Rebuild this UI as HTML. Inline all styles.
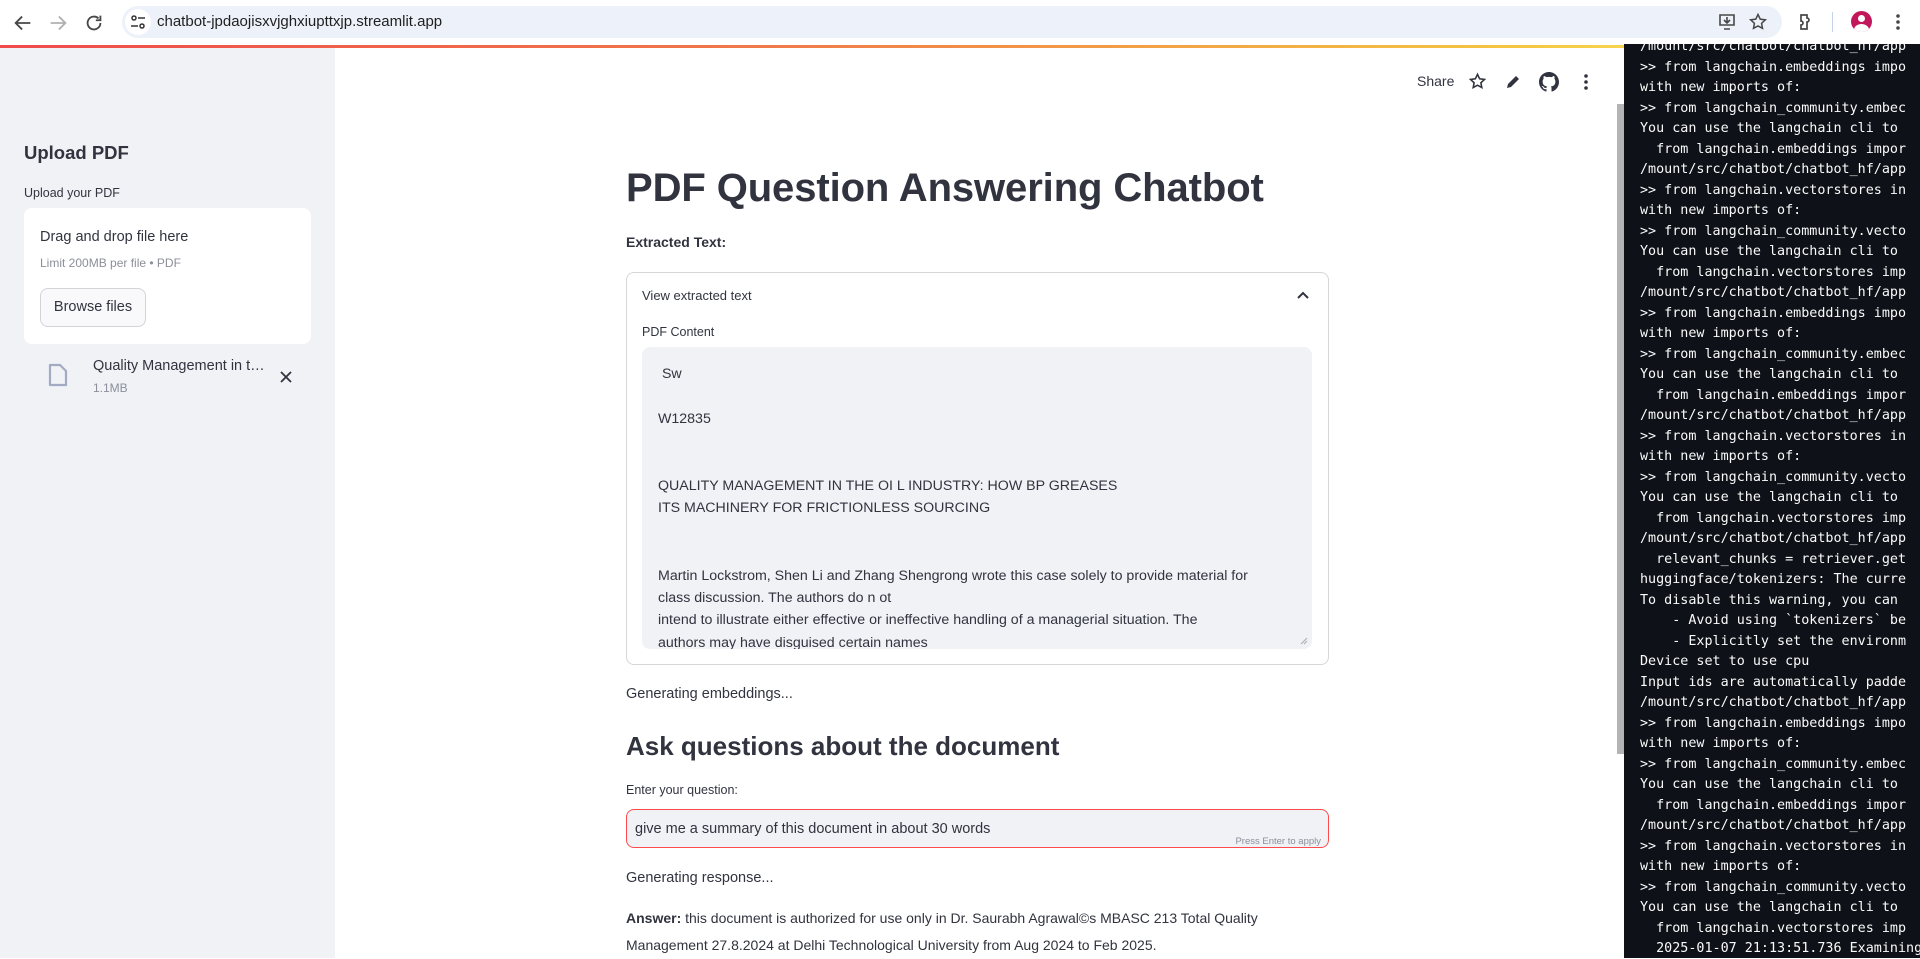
<!DOCTYPE html>
<html><head><meta charset="utf-8">
<style>
*{box-sizing:border-box;margin:0;padding:0}
html,body{width:1920px;height:958px;overflow:hidden;background:#fff;font-family:"Liberation Sans",sans-serif;color:#31333f}
.abs{position:absolute}
#bar{position:absolute;left:0;top:0;width:1920px;height:46px;background:#fff}
#addr{position:absolute;left:122px;top:6px;width:1660px;height:32px;border-radius:16px;background:#edf2fa}
#deco{position:absolute;left:0;top:45px;width:1920px;height:3px;background:linear-gradient(90deg,#ef4b4b 0%,#f07a4a 40%,#f5c842 80%,#fffd80 100%)}
#side{position:absolute;left:0;top:48px;width:335px;height:910px;background:#f0f2f6}
#term{position:absolute;left:1624px;top:44px;width:296px;height:914px;background:#0e1117;color:#fafafa;font-family:"DejaVu Sans Mono","Liberation Mono",monospace;font-size:13.4px;line-height:20.5px;white-space:pre;overflow:hidden;padding-left:16px}
#term div{margin-top:-7px}
</style></head><body>
<div id="bar">
 <svg class="abs" style="left:12px;top:12px" width="22" height="22" viewBox="0 0 24 24"><path d="M20 12H5M11 5l-7 7 7 7" fill="none" stroke="#474747" stroke-width="2"/></svg>
 <svg class="abs" style="left:47px;top:12px" width="22" height="22" viewBox="0 0 24 24"><path d="M4 12h15M13 5l7 7-7 7" fill="none" stroke="#b0b0b0" stroke-width="2"/></svg>
 <svg class="abs" style="left:83px;top:12px" width="22" height="22" viewBox="0 0 24 24"><path d="M19 12a7 7 0 1 1-2.1-5M19 4v5h-5" fill="none" stroke="#474747" stroke-width="2"/></svg>
 <div id="addr">
  <div class="abs" style="left:3px;top:3px;width:26px;height:26px;border-radius:13px;background:#fff"></div>
  <svg class="abs" style="left:8px;top:8px" width="16" height="16" viewBox="0 0 16 16"><circle cx="4" cy="4" r="2" fill="none" stroke="#333" stroke-width="1.5"/><path d="M8 4h7M1 12h7" stroke="#333" stroke-width="1.5"/><circle cx="12" cy="12" r="2" fill="none" stroke="#333" stroke-width="1.5"/></svg>
  <div class="abs" style="left:35px;top:7px;font-size:15px;color:#1f1f1f">chatbot-jpdaojisxvjghxiupttxjp.streamlit.app</div>
  <svg class="abs" style="left:1596px;top:7px" width="18" height="18" viewBox="0 0 18 18"><path d="M2 2h14v10H2zM6 16h6M9 4v6M6 7l3 3 3-3" fill="none" stroke="#474747" stroke-width="1.6"/></svg>
  <svg class="abs" style="left:1626px;top:6px" width="20" height="20" viewBox="0 0 24 24"><path d="M12 3l2.7 5.6 6.1.8-4.5 4.2 1.1 6L12 16.7 6.6 19.6l1.1-6L3.2 9.4l6.1-.8z" fill="none" stroke="#474747" stroke-width="1.8"/></svg>
 </div>
 <svg class="abs" style="left:1796px;top:12px" width="20" height="20" viewBox="0 0 20 20"><path d="M5 3h6v3a2 2 0 0 1 0 4v0v7H5v-4a2 2 0 0 0 0-4z" fill="none" stroke="#474747" stroke-width="1.7"/></svg>
 <div class="abs" style="left:1832px;top:12px;width:1px;height:20px;background:#c5d3ea"></div>
 <div class="abs" style="left:1851px;top:11px;width:21px;height:21px;border-radius:50%;background:#c2185b;overflow:hidden"><div class="abs" style="left:7px;top:4px;width:7px;height:7px;border-radius:50%;background:#fff"></div><div class="abs" style="left:3px;top:13px;width:15px;height:12px;border-radius:50%;background:#fff"></div></div>
 <svg class="abs" style="left:1893px;top:12px" width="10" height="20" viewBox="0 0 10 20"><circle cx="5" cy="4" r="1.8" fill="#474747"/><circle cx="5" cy="10" r="1.8" fill="#474747"/><circle cx="5" cy="16" r="1.8" fill="#474747"/></svg>
</div>
<div id="deco"></div>
<div id="side">
 <div class="abs" style="left:24px;top:94px;font-size:18.5px;font-weight:bold">Upload PDF</div>
 <div class="abs" style="left:24px;top:138px;font-size:12.5px">Upload your PDF</div>
 <div class="abs" style="left:24px;top:160px;width:287px;height:136px;background:#fff;border-radius:8px">
  <div class="abs" style="left:16px;top:21px;font-size:14.5px">Drag and drop file here</div>
  <div class="abs" style="left:16px;top:48px;font-size:12px;color:#8c8f99">Limit 200MB per file • PDF</div>
  <div class="abs" style="left:16px;top:80px;width:106px;height:39px;border:1px solid #d3d4d8;border-radius:8px;background:#f9f9fb;font-size:14.5px;line-height:37px;text-align:center">Browse files</div>
 </div>
 <svg class="abs" style="left:47px;top:315px" width="22" height="24" viewBox="0 0 22 24"><path d="M3 2h10l6 6v14H3z" fill="none" stroke="#a3abc4" stroke-width="2.2" stroke-linejoin="round"/></svg>
 <div class="abs" style="left:93px;top:310px;font-size:14.5px">Quality Management in t…</div>
 <div class="abs" style="left:93px;top:333px;font-size:12px;color:#8c8f99">1.1MB</div>
 <svg class="abs" style="left:279px;top:322px" width="14" height="14" viewBox="0 0 14 14"><path d="M2 2l10 10M12 2L2 12" stroke="#31333f" stroke-width="1.8"/></svg>
</div>
<div class="abs" style="left:1417px;top:73px;font-size:14px">Share</div>
<svg class="abs" style="left:1468px;top:72px" width="19" height="19" viewBox="0 0 24 24"><path d="M12 3l2.7 5.6 6.1.8-4.5 4.2 1.1 6L12 16.7 6.6 19.6l1.1-6L3.2 9.4l6.1-.8z" fill="none" stroke="#31333f" stroke-width="2"/></svg>
<svg class="abs" style="left:1505px;top:74px" width="16" height="16" viewBox="0 0 16 16"><path d="M2 14l1-4 8-8 3 3-8 8z" fill="#31333f"/></svg>
<svg class="abs" style="left:1539px;top:72px" width="20" height="20" viewBox="0 0 16 16"><path fill="#31333f" d="M8 0C3.58 0 0 3.58 0 8c0 3.54 2.290 6.530 5.470 7.590.4.07.55-.17.55-.38 0-.19-.01-.82-.01-1.49-2.010.37-2.530-.49-2.690-.94-.09-.23-.48-.94-.82-1.130-.28-.15-.68-.52-.01-.53.63-.01 1.080.58 1.230.82.72 1.210 1.870.87 2.330.66.07-.52.28-.87.51-1.070-1.780-.2-3.640-.89-3.640-3.950 0-.87.31-1.590.82-2.150-.08-.2-.36-1.020.08-2.120 0 0 .67-.21 2.200.82.64-.18 1.320-.27 2-.27.68 0 1.360.09 2 .27 1.530-1.040 2.200-.82 2.200-.82.44 1.100.16 1.920.08 2.120.51.56.82 1.270.82 2.150 0 3.070-1.870 3.750-3.650 3.950.29.25.54.73.54 1.480 0 1.070-.01 1.930-.01 2.200 0 .21.15.46.55.38A8.013 8.013 0 0016 8c0-4.420-3.580-8-8-8z"/></svg>
<svg class="abs" style="left:1581px;top:72px" width="10" height="20" viewBox="0 0 10 20"><circle cx="5" cy="4" r="1.8" fill="#31333f"/><circle cx="5" cy="10" r="1.8" fill="#31333f"/><circle cx="5" cy="16" r="1.8" fill="#31333f"/></svg>
<div class="abs" style="left:1617px;top:104px;width:7px;height:650px;background:#b4b4b4"></div>
<div class="abs" style="left:626px;top:166px;font-size:40px;font-weight:bold;letter-spacing:-0.1px">PDF Question Answering Chatbot</div>
<div class="abs" style="left:626px;top:234px;font-size:14px;font-weight:bold">Extracted Text:</div>
<div class="abs" style="left:626px;top:272px;width:703px;height:393px;border:1px solid #d6d6d9;border-radius:8px">
 <div class="abs" style="left:15px;top:15px;font-size:13px">View extracted text</div>
 <svg class="abs" style="left:669px;top:17px" width="14" height="10" viewBox="0 0 14 10"><path d="M2 8l5-5 5 5" fill="none" stroke="#31333f" stroke-width="2"/></svg>
 <div class="abs" style="left:15px;top:52px;font-size:12.5px">PDF Content</div>
 <div class="abs" style="left:15px;top:74px;width:670px;height:302px;background:#f0f2f6;border-radius:8px;overflow:hidden">
  <div class="abs" style="left:16px;top:16px;font-size:14.2px;line-height:22.4px;white-space:pre"> Sw

W12835


QUALITY MANAGEMENT IN THE OI L INDUSTRY: HOW BP GREASES
ITS MACHINERY FOR FRICTIONLESS SOURCING


Martin Lockstrom, Shen Li and Zhang Shengrong wrote this case solely to provide material for
class discussion. The authors do n ot
intend to illustrate either effective or ineffective handling of a managerial situation. The
authors may have disguised certain names</div>
  <svg class="abs" style="left:658px;top:290px" width="8" height="8" viewBox="0 0 8 8"><path d="M7 1L1 7M7 4L4 7" stroke="#aaa" stroke-width="1"/></svg>
 </div>
</div>
<div class="abs" style="left:626px;top:686px;font-size:14.5px">Generating embeddings...</div>
<div class="abs" style="left:626px;top:731px;font-size:26px;font-weight:bold">Ask questions about the document</div>
<div class="abs" style="left:626px;top:783px;font-size:12.5px">Enter your question:</div>
<div class="abs" style="left:626px;top:809px;width:703px;height:39px;border:1px solid #ff4b4b;border-radius:8px;background:#f0f2f6">
 <div class="abs" style="left:8px;top:11px;font-size:14.5px">give me a summary of this document in about 30 words</div>
 <div class="abs" style="right:7px;top:26px;font-size:9.5px;color:#8c8f99">Press Enter to apply</div>
</div>
<div class="abs" style="left:626px;top:870px;font-size:14.5px">Generating response...</div>
<div class="abs" style="left:626px;top:905px;font-size:14px;line-height:27px;width:700px"><b>Answer:</b> this document is authorized for use only in Dr. Saurabh Agrawal©s MBASC 213 Total Quality Management 27.8.2024 at Delhi Technological University from Aug 2024 to Feb 2025.</div>
<div id="term"><div>/mount/src/chatbot/chatbot_hf/app
>> from langchain.embeddings impo
with new imports of:
>> from langchain_community.embec
You can use the langchain cli to
  from langchain.embeddings impor
/mount/src/chatbot/chatbot_hf/app
>> from langchain.vectorstores in
with new imports of:
>> from langchain_community.vecto
You can use the langchain cli to
  from langchain.vectorstores imp
/mount/src/chatbot/chatbot_hf/app
>> from langchain.embeddings impo
with new imports of:
>> from langchain_community.embec
You can use the langchain cli to
  from langchain.embeddings impor
/mount/src/chatbot/chatbot_hf/app
>> from langchain.vectorstores in
with new imports of:
>> from langchain_community.vecto
You can use the langchain cli to
  from langchain.vectorstores imp
/mount/src/chatbot/chatbot_hf/app
  relevant_chunks = retriever.get
huggingface/tokenizers: The curre
To disable this warning, you can
    - Avoid using `tokenizers` be
    - Explicitly set the environm
Device set to use cpu
Input ids are automatically padde
/mount/src/chatbot/chatbot_hf/app
>> from langchain.embeddings impo
with new imports of:
>> from langchain_community.embec
You can use the langchain cli to
  from langchain.embeddings impor
/mount/src/chatbot/chatbot_hf/app
>> from langchain.vectorstores in
with new imports of:
>> from langchain_community.vecto
You can use the langchain cli to
  from langchain.vectorstores imp
  2025-01-07 21:13:51.736 Examining</div></div>
</body></html>
